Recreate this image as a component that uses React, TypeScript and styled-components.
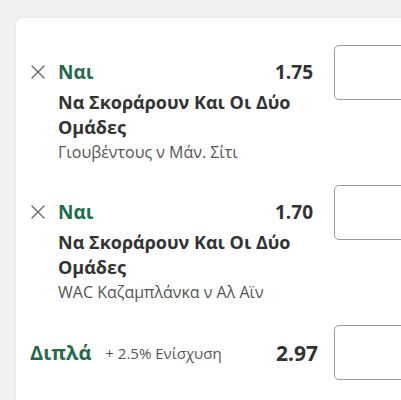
import React from "react";
import styled, { createGlobalStyle } from "styled-components";

interface Selection {
    pick: string;
    odds: string;
    market: string;
    event: string;
}

const selections: Selection[] = [
    { pick: "Ναι", odds: "1.75", market: "Να Σκοράρουν Και Οι Δύο Ομάδες", event: "Γιουβέντους ν Μάν. Σίτι" },
    { pick: "Ναι", odds: "1.70", market: "Να Σκοράρουν Και Οι Δύο Ομάδες", event: "WAC Καζαμπλάνκα ν Αλ Αϊν" },
];

const GlobalStyle = createGlobalStyle`
    html, body {
        margin: 0;
        padding: 0;
        background: #f0f0f0;
        overflow: hidden;
    }
    body {
        font-family: "Open Sans", "Noto Sans", sans-serif;
        -webkit-font-smoothing: antialiased;
    }
`;

const Page = styled.div`
    width: 401px;
    height: 400px;
    padding: 17px 0 0 15px;
    box-sizing: border-box;
`;

const Card = styled.div`
    width: 420px;
    min-height: 400px;
    background: #fff;
    border-radius: 8px;
    border: 1px solid #e8e8e8;
    box-sizing: border-box;
    padding: 27px 0 0 14px;
    display: flex;
    flex-direction: column;
    gap: 20px;
`;

const Row = styled.div`
    display: grid;
    grid-template-columns: 28px 255px 111px;
    align-items: start;
`;

const Remove = styled.button`
    grid-column: 1;
    grid-row: 1;
    margin-top: 20px;
    margin-left: 1px;
    padding: 0;
    border: 0;
    background: none;
    width: 14px;
    height: 14px;
    display: flex;
    color: #666;
`;

const Head = styled.div`
    grid-column: 2;
    grid-row: 1;
    margin-top: 14px;
    display: flex;
    justify-content: space-between;
    align-items: baseline;
    line-height: 26px;
`;

const Pick = styled.span<{ $size: number }>`
    font-size: ${(p) => p.$size}px;
    font-weight: 700;
    color: #236c4b;
`;

const Odds = styled.span<{ $size: number }>`
    font-size: ${(p) => p.$size}px;
    font-weight: 700;
    color: #333;
`;

const Stake = styled.input`
    width: 90px;
    height: 55px;
    box-sizing: border-box;
    border: 1px solid #9a9a9a;
    border-radius: 5px;
    background: #fff;
    margin: 0 0 0 21px;
`;

const RowStake = styled(Stake)`
    grid-column: 3;
    grid-row: 1 / span 2;
`;

const Market = styled.div`
    grid-column: 2;
    grid-row: 2;
    margin-top: 5px;
    font-size: 18px;
    font-weight: 700;
    line-height: 25px;
    color: #333;
`;

const Event = styled.div`
    grid-column: 2;
    grid-row: 3;
    font-size: 16px;
    line-height: 25px;
    color: #555;
`;

const Multiple = styled.div`
    display: grid;
    grid-template-columns: auto 1fr auto 111px;
    align-items: center;
    width: 394px;
    height: 55px;
`;

const Boost = styled.span`
    margin-left: 14px;
    font-size: 15px;
    color: #555;
`;

const MultipleOdds = styled(Odds)`
    margin-right: -5px;
`;

const CloseIcon = () => (
    <svg width="14" height="14" viewBox="0 0 14 14" fill="none" stroke="currentColor" strokeWidth="1.4" strokeLinecap="round">
        <path d="M1 1L13 13M13 1L1 13" />
    </svg>
);

export default function App() {
    return (
        <Page>
            <GlobalStyle />
            <Card>
                {selections.map((s, i) => (
                    <Row key={i}>
                        <Remove aria-label="remove">
                            <CloseIcon />
                        </Remove>
                        <Head>
                            <Pick $size={19}>{s.pick}</Pick>
                            <Odds $size={19}>{s.odds}</Odds>
                        </Head>
                        <RowStake />
                        <Market>{s.market}</Market>
                        <Event>{s.event}</Event>
                    </Row>
                ))}
                <Multiple>
                    <Pick $size={20}>Διπλά</Pick>
                    <Boost>+ 2.5% Ενίσχυση</Boost>
                    <MultipleOdds $size={21}>2.97</MultipleOdds>
                    <Stake />
                </Multiple>
            </Card>
        </Page>
    );
}
